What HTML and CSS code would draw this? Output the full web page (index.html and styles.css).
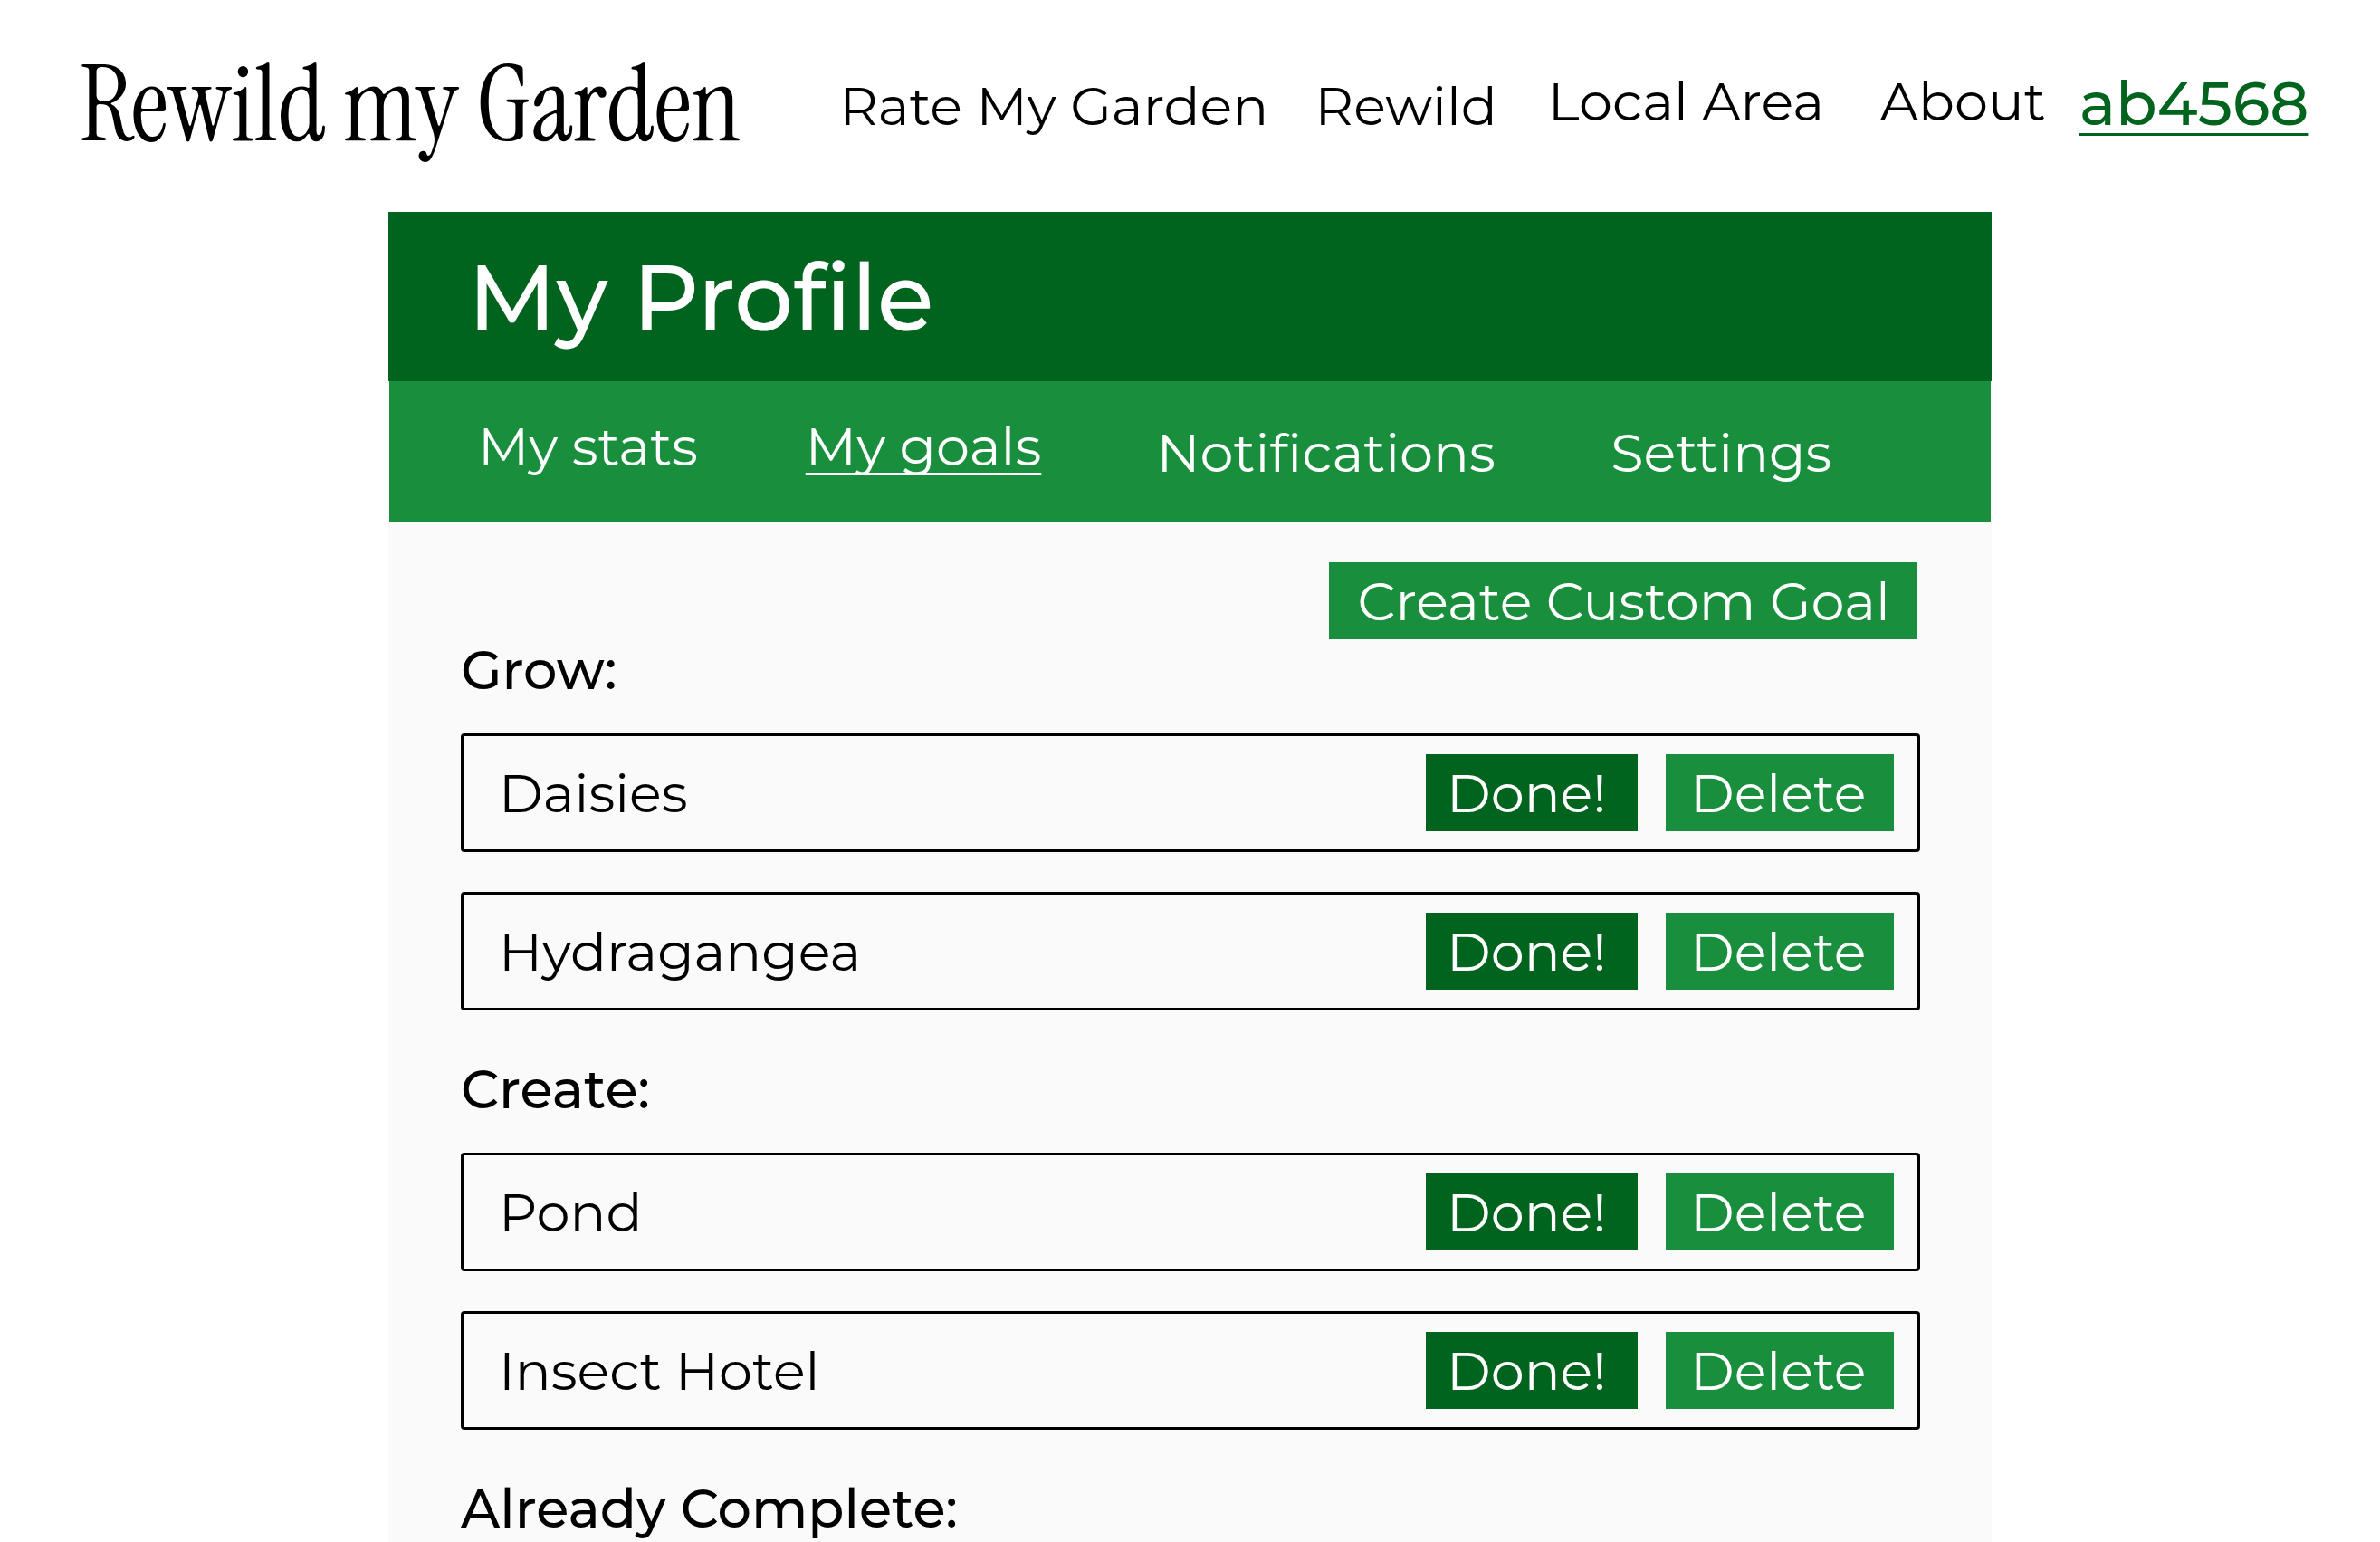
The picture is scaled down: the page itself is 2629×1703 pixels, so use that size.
FILE: index.html
```html
<!DOCTYPE html>
<html lang="en">
<head>
<meta charset="utf-8">
<title>My Profile - Rewild my Garden</title>
<link rel="stylesheet" href="styles.css">
</head>
<body>
<header class="site-header">
  <a class="logo" href="#">Rewild my Garden</a>
  <nav class="site-nav" aria-label="Main">
    <a class="nav-link" href="#">Rate My Garden</a>
    <a class="nav-link" href="#">Rewild</a>
    <a class="nav-link nav-link-raised" href="#">Local Area</a>
    <a class="nav-link nav-link-raised" href="#">About</a>
    <a class="user-link" href="#">ab4568</a>
  </nav>
</header>
<div class="page">
  <main class="profile">
    <h1 class="profile-title">My Profile</h1>
    <nav class="tabs" aria-label="Profile">
      <a class="tab" href="#">My stats</a>
      <a class="tab tab-current" href="#" aria-current="page">My goals</a>
      <a class="tab tab-lowered" href="#">Notifications</a>
      <a class="tab tab-lowered" href="#">Settings</a>
    </nav>
    <div class="goals">
      <button class="button button-create" type="button">Create Custom Goal</button>
      <section class="goal-group">
        <h2 class="group-title">Grow:</h2>
        <ul class="goal-list">
          <li class="goal"><span class="goal-name">Daisies</span><button class="button button-done" type="button">Done!</button><button class="button button-delete" type="button">Delete</button></li>
          <li class="goal"><span class="goal-name">Hydragangea</span><button class="button button-done" type="button">Done!</button><button class="button button-delete" type="button">Delete</button></li>
        </ul>
      </section>
      <section class="goal-group">
        <h2 class="group-title">Create:</h2>
        <ul class="goal-list">
          <li class="goal"><span class="goal-name">Pond</span><button class="button button-done" type="button">Done!</button><button class="button button-delete" type="button">Delete</button></li>
          <li class="goal"><span class="goal-name">Insect Hotel</span><button class="button button-done" type="button">Done!</button><button class="button button-delete" type="button">Delete</button></li>
        </ul>
      </section>
      <section class="goal-group">
        <h2 class="group-title">Already Complete:</h2>
      </section>
    </div>
  </main>
</div>
</body>
</html>
```
FILE: styles.css
```css
:root {
  --dark: #00641e;
  --green: #198f3e;
  --panel: #fafafa;
}

* { box-sizing: border-box; }

body {
  margin: 0;
  min-height: 100vh;
  display: flex;
  flex-direction: column;
  background: #fff;
  color: #000;
  font-family: Montserrat, Inter, sans-serif;
  font-size: 59px;
  font-weight: 400;
  font-variant-ligatures: none;
  line-height: 64px;
}

a { color: inherit; text-decoration: none; white-space: nowrap; }

.site-header {
  display: grid;
  grid-template-columns: minmax(0, 839fr) minmax(0, 1623fr);
  align-items: start;
  padding: 60px 78px 0 88px;
  height: 234px;
}

.logo {
  font-family: "Instrument Serif", "Bodoni Moda", "Liberation Serif", serif;
  font-size: 116px;
  font-weight: 400;
  line-height: 112px;
}

.site-nav {
  display: grid;
  grid-template-columns: minmax(0, 525fr) minmax(0, 257fr) minmax(0, 367fr) minmax(0, 220fr) minmax(0, 254fr);
  padding-top: 25px;
}

.nav-link-raised { margin-top: -5px; }

.user-link {
  color: var(--dark);
  font-size: 67px;
  font-weight: 500;
  line-height: 58px;
  text-decoration: underline;
  text-decoration-thickness: 3px;
  text-underline-offset: 9px;
}

.page {
  flex: 1;
  display: grid;
  grid-template-columns: minmax(0, 429fr) minmax(0, 1771fr) minmax(0, 429fr);
}

.profile {
  grid-column: 2;
  display: flex;
  flex-direction: column;
}

.profile-title {
  margin: 0;
  padding: 39px 88px 36px;
  background: var(--dark);
  color: #fff;
  font-size: 102px;
  font-weight: 500;
  line-height: 112px;
}

.tabs {
  display: grid;
  grid-template-columns: minmax(0, 362fr) minmax(0, 388fr) minmax(0, 502fr) minmax(0, 420fr);
  align-items: start;
  margin: 0 1px;
  padding: 40px 0 45px 98px;
  background: var(--green);
  color: #fff;
}

.tab-current {
  text-decoration: underline;
  text-decoration-thickness: 3px;
  text-decoration-skip-ink: none;
  text-underline-offset: 8px;
}

.tab-lowered { padding-top: 7px; }

.goals {
  flex: 1;
  display: flex;
  flex-direction: column;
  padding: 44px 79px 0 80px;
  background: var(--panel);
}

.button {
  height: 85px;
  border: 0;
  background: var(--green);
  color: #fff;
  font: inherit;
  text-align: left;
  white-space: nowrap;
}

.button-create { align-self: flex-end; margin-right: 3px; padding: 0 30px 0 32px; }
.button-done { min-width: 234px; padding: 0 23px; background: var(--dark); }
.button-delete { min-width: 252px; margin-left: 31px; padding: 0 27px; }

.goal-group { margin-top: 2px; }
.goal-group + .goal-group { margin-top: 55px; }

.group-title {
  margin: 0 0 38px;
  font-size: 59px;
  font-weight: 500;
  line-height: 64px;
}

.goal-list {
  display: grid;
  gap: 44px;
  margin: 0;
  padding: 0;
  list-style: none;
}

.goal {
  display: flex;
  align-items: center;
  padding: 20px 26px 20px 39px;
  border: 3px solid #000;
  border-radius: 4px;
}

.goal-name { flex: 1; }
```
